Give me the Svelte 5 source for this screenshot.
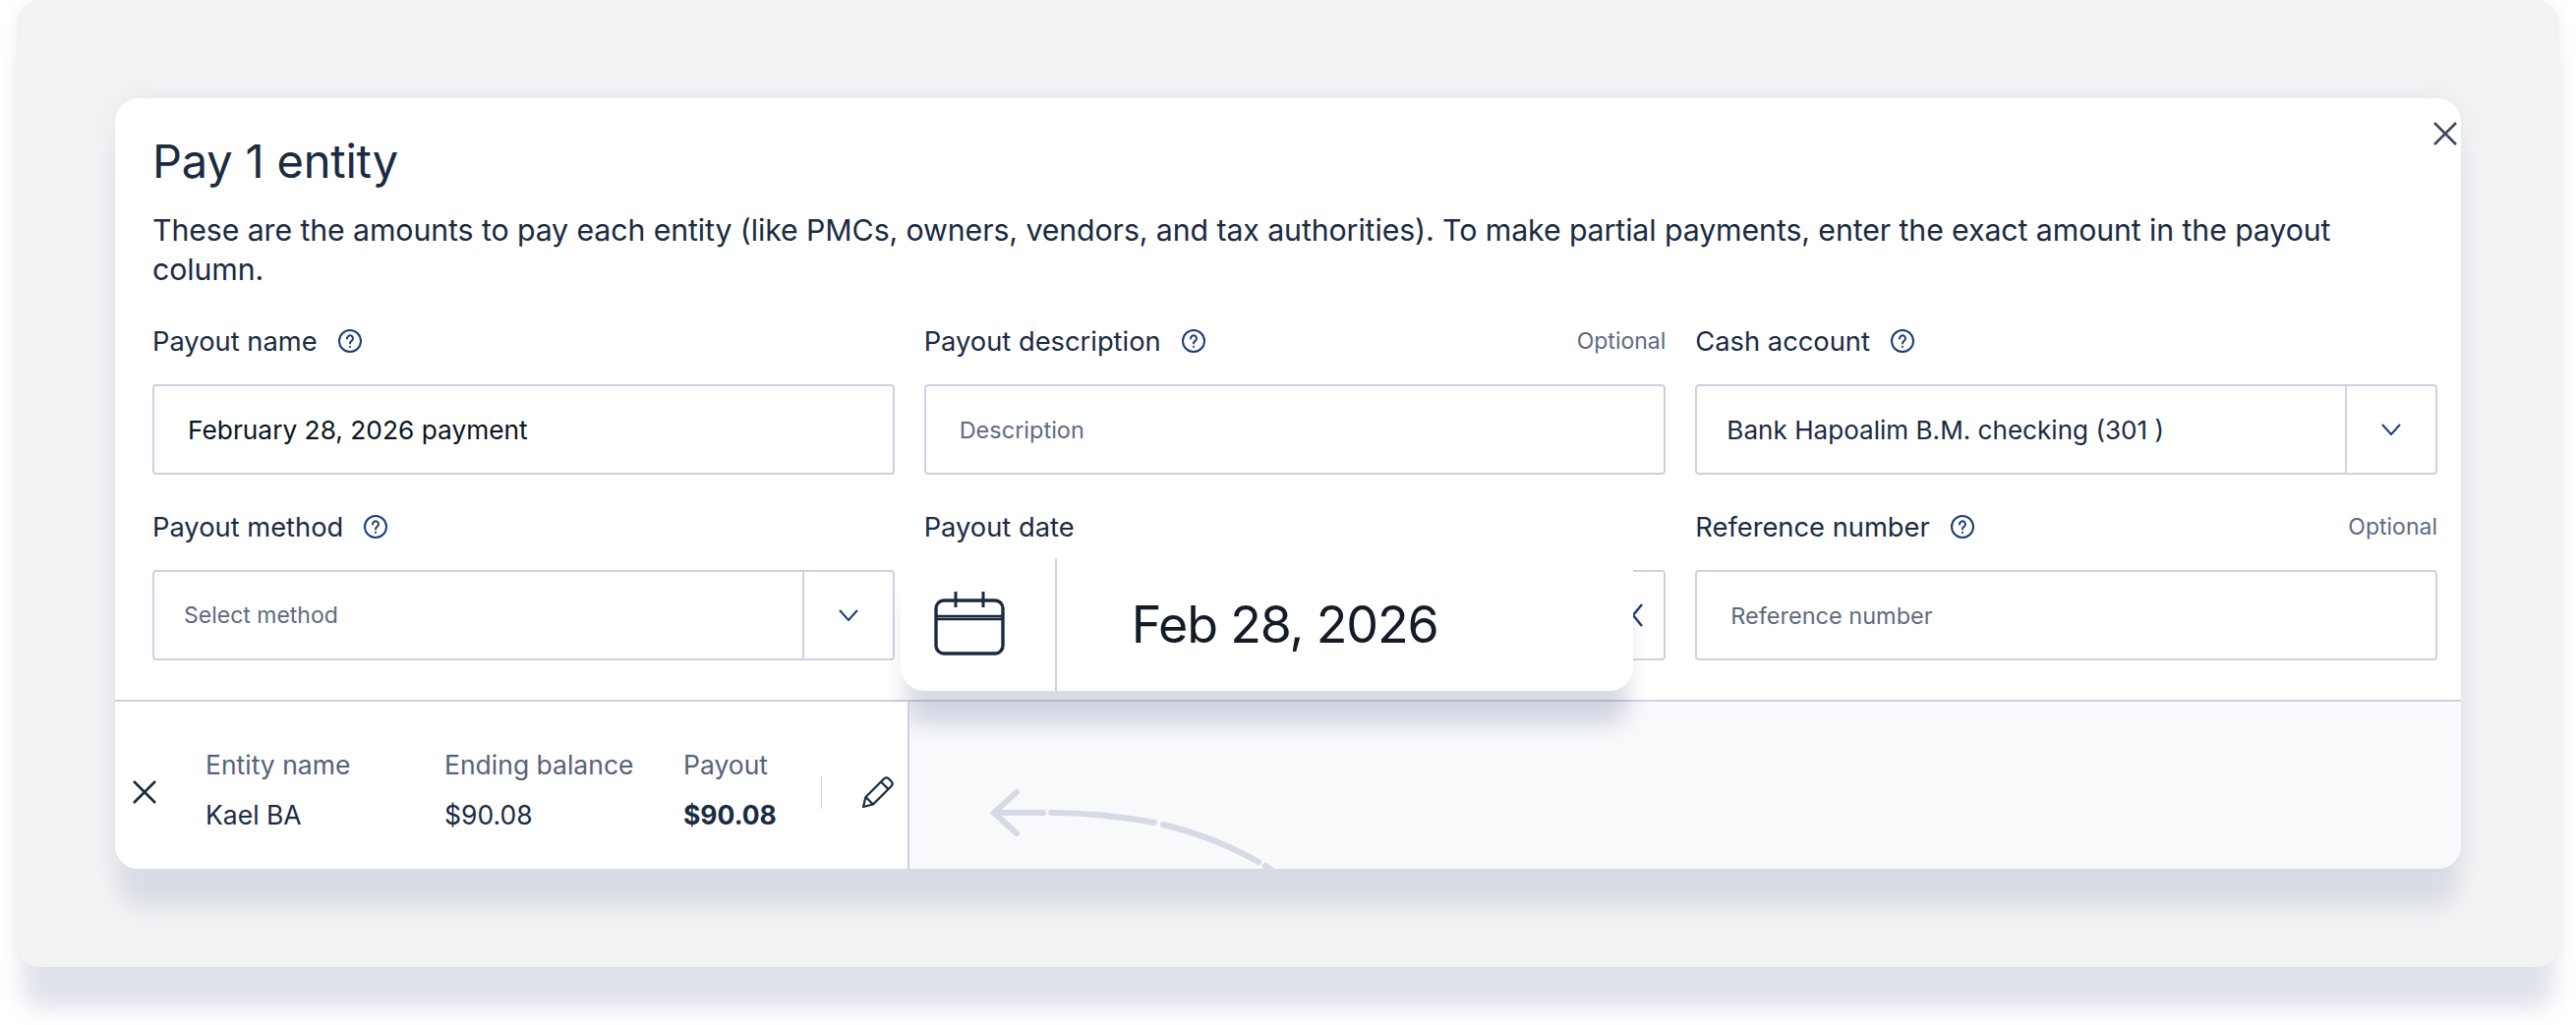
<script lang="ts">
  const fieldsTop = [
    { label: "Payout name", help: true },
    { label: "Payout description", help: true, optional: true },
    { label: "Cash account", help: true },
  ];
</script>

{#snippet help()}
  <svg class="help" viewBox="0 0 24 24" fill="none" stroke="#1d3c78" stroke-width="2" stroke-linecap="round">
    <circle cx="12" cy="12" r="11" />
    <path d="M9 9.4a3 3 0 1 1 4.6 2.5c-1 .7-1.6 1.2-1.6 2.6" />
    <path d="M12 17.8v.2" />
  </svg>
{/snippet}

{#snippet chevron()}
  <svg class="chev" viewBox="0 0 20 12" fill="none" stroke="#1d3c78" stroke-width="2"><path d="M1 1l9 10 9-10" /></svg>
{/snippet}

<div class="stage">
  <div class="outer">
    <div class="modal">
      <svg class="close" viewBox="0 0 24 24" fill="none" stroke="#3d4a5e" stroke-width="2.6"><path d="M1 1l22 22M23 1L1 23" /></svg>

      <div class="form">
        <h1>Pay 1 entity</h1>
        <p class="desc">These are the amounts to pay each entity (like PMCs, owners, vendors, and tax authorities). To make partial payments, enter the exact amount in the payout column.</p>

        <div class="grid">
          <div class="field">
            <div class="label"><span>{fieldsTop[0].label}</span>{@render help()}</div>
            <div class="input value">February 28, 2026 payment</div>
          </div>
          <div class="field">
            <div class="label"><span>{fieldsTop[1].label}</span>{@render help()}<em>Optional</em></div>
            <div class="input placeholder">Description</div>
          </div>
          <div class="field">
            <div class="label"><span>{fieldsTop[2].label}</span>{@render help()}</div>
            <div class="select">
              <div class="sel-text">Bank Hapoalim B.M. checking (301 )</div>
              <div class="caret">{@render chevron()}</div>
            </div>
          </div>

          <div class="field">
            <div class="label"><span>Payout method</span>{@render help()}</div>
            <div class="select">
              <div class="sel-text muted">Select method</div>
              <div class="caret">{@render chevron()}</div>
            </div>
          </div>
          <div class="field date-field">
            <div class="label"><span>Payout date</span></div>
            <div class="input"></div>
            <svg class="peek" viewBox="0 0 12 24" fill="none" stroke="#1d3c78" stroke-width="2.4"><path d="M11 1L2 12l9 11" /></svg>
            <div class="pop">
              <div class="pop-icon">
                <svg viewBox="0 0 72 66" fill="none" stroke="#1b2a41" stroke-width="3.4">
                  <rect x="2" y="10" width="68" height="54" rx="8" />
                  <path d="M2 26h68M2 29h68" stroke-width="2.4" />
                  <path d="M22 1v16M50 1v16" stroke-width="3" />
                </svg>
              </div>
              <div class="pop-date">Feb 28, 2026</div>
            </div>
          </div>
          <div class="field">
            <div class="label"><span>Reference number</span>{@render help()}<em>Optional</em></div>
            <div class="input placeholder ref">Reference number</div>
          </div>
        </div>
      </div>

      <div class="bottom">
        <div class="row">
          <svg class="remove" viewBox="0 0 24 24" fill="none" stroke="#1a2b42" stroke-width="2.6"><path d="M1 1l22 22M23 1L1 23" /></svg>
          <div class="cols">
            <div class="col c1"><span>Entity name</span><b>Kael BA</b></div>
            <div class="col c2"><span>Ending balance</span><b>$90.08</b></div>
            <div class="col c3"><span>Payout</span><b class="strong">$90.08</b></div>
          </div>
          <i class="sep"></i>
          <svg class="pencil" viewBox="0 0 34 34" fill="none" stroke="#1a2b42" stroke-width="2.2" stroke-linejoin="round">
            <path d="M2 32l2.500-10L23 3.500q2.500-2.200 5 0l2.500 2.500q2.300 2.600 0 5L12 29.500z" />
            <path d="M20 6.500l7.500 7.500M4.500 22l7.500 7.500" />
          </svg>
        </div>
        <div class="empty">
          <svg class="arrow" viewBox="0 0 300 100" fill="none" stroke="#d6dae7" stroke-width="6" stroke-linecap="round">
            <path d="M27 5L4 26l23 21" />
            <path d="M4 26h50" />
            <path d="M62 26c36 0 72 4 105 10" />
            <path d="M176 38c38 9 72 24 97 38" />
            <path d="M280 80l10 7" />
          </svg>
        </div>
      </div>
    </div>
  </div>
</div>

<style>
  :global(body) {
    margin: 0;
    background: #fff;
  }
  .stage {
    width: 2620px;
    height: 1043px;
    padding: 0 17px;
    box-sizing: border-box;
    overflow: hidden;
    font-family: Inter, "Noto Sans", sans-serif;
    color: #1a2b42;
  }
  .outer {
    height: 984px;
    padding: 100px 100px 0;
    box-sizing: border-box;
    background: #f3f3f4;
    border-radius: 24px;
    box-shadow: 0 48px 24px -6px #e0e2eb, 0 0 14px rgba(205, 210, 226, 0.3);
  }
  .modal {
    position: relative;
    height: 784px;
    display: flex;
    flex-direction: column;
    background: #fff;
    border-radius: 24px;
    box-shadow: 0 43px 22px -4px #d9dce5, 0 0 24px rgba(200, 205, 222, 0.3);
  }
  .close {
    position: absolute;
    top: 24px;
    right: 4px;
    width: 24px;
    height: 24px;
  }
  .form {
    padding: 36px 24px 40px 38px;
  }
  h1 {
    margin: 0;
    font-size: 47px;
    line-height: 56px;
    font-weight: 400;
    letter-spacing: -0.2px;
  }
  .desc {
    margin: 22px 0 33px;
    font-size: 30.300px;
    line-height: 40px;
    letter-spacing: -0.1px;
  }
  .grid {
    display: grid;
    grid-template-columns: repeat(3, 1fr);
    column-gap: 30px;
    row-gap: 33px;
  }
  .field {
    display: flex;
    flex-direction: column;
    gap: 24px;
  }
  .label {
    height: 40px;
    display: flex;
    align-items: center;
    font-size: 27.300px;
    color: #1a2b42;
  }
  .label em {
    margin-left: auto;
    font-style: normal;
    font-size: 23px;
    color: #5e6b80;
  }
  .help {
    width: 24px;
    height: 24px;
    margin-left: 21px;
  }
  .input,
  .select {
    height: 92px;
    box-sizing: border-box;
    border: 2px solid #ced2e0;
    border-radius: 4px;
    background: #fff;
    display: flex;
    align-items: center;
  }
  .input {
    padding-left: 34px;
  }
  .value {
    font-size: 26.300px;
    color: #0b1420;
  }
  .placeholder {
    font-size: 23.500px;
    color: #5e6b80;
  }
  .sel-text {
    flex: 1;
    padding-left: 30px;
    font-size: 26.100px;
  }
  .muted {
    font-size: 23px;
    color: #5e6b80;
  }
  .caret {
    width: 92px;
    height: 100%;
    border-left: 2px solid #ced2e0;
    display: flex;
    align-items: center;
    justify-content: center;
    box-sizing: border-box;
  }
  .chev {
    width: 20px;
    height: 12px;
  }
  .date-field {
    position: relative;
  }
  .peek {
    position: absolute;
    right: 23px;
    top: 98px;
    width: 12px;
    height: 24px;
  }
  .pop {
    position: absolute;
    left: -24px;
    right: 33px;
    top: 52px;
    height: 135px;
    display: flex;
    background: #fff;
    border-radius: 0 0 24px 24px;
    box-shadow: 0 40px 22px -6px rgba(40, 55, 110, 0.18);
    z-index: 1;
  }
  .pop-icon {
    width: 159px;
    box-sizing: border-box;
    padding-left: 34px;
    border-right: 2px solid #ced2e0;
    display: flex;
    align-items: center;
  }
  .pop-icon svg {
    width: 72px;
    height: 66px;
    margin-top: -4px;
  }
  .pop-date {
    padding-left: 76px;
    display: flex;
    align-items: center;
    font-size: 52px;
    letter-spacing: -1.2px;
    color: #141c28;
  }
  .bottom {
    flex: 1;
    display: flex;
    border-top: 2px solid #ced2e0;
    min-height: 0;
    overflow: hidden;
    border-radius: 0 0 24px 24px;
  }
  .row {
    position: relative;
    z-index: 2;
    width: 808px;
    flex: none;
    box-sizing: border-box;
    background: #fff;
    border-right: 2px solid #ced2e0;
    display: flex;
    align-items: center;
    padding: 14px 0 0 18px;
  }
  .remove {
    width: 24px;
    height: 24px;
    flex: none;
  }
  .cols {
    display: flex;
    margin-left: 50px;
    width: 626px;
  }
  .col {
    display: flex;
    flex-direction: column;
    gap: 20px;
    font-size: 26.500px;
    line-height: 31px;
    margin-top: -4px;
  }
  .col span {
    color: #56627a;
  }
  .col b {
    font-weight: 400;
  }
  .col b.strong {
    font-weight: 700;
  }
  .c1,
  .c2 {
    width: 243px;
  }
  .sep {
    width: 1px;
    height: 33px;
    background: #ced2e0;
  }
  .pencil {
    width: 34px;
    height: 34px;
    margin-left: 40px;
  }
  .empty {
    flex: 1;
    background: #f8f9fb;
    position: relative;
  }
  .arrow {
    position: absolute;
    left: 82px;
    top: 87px;
    width: 300px;
    height: 100px;
  }
</style>
